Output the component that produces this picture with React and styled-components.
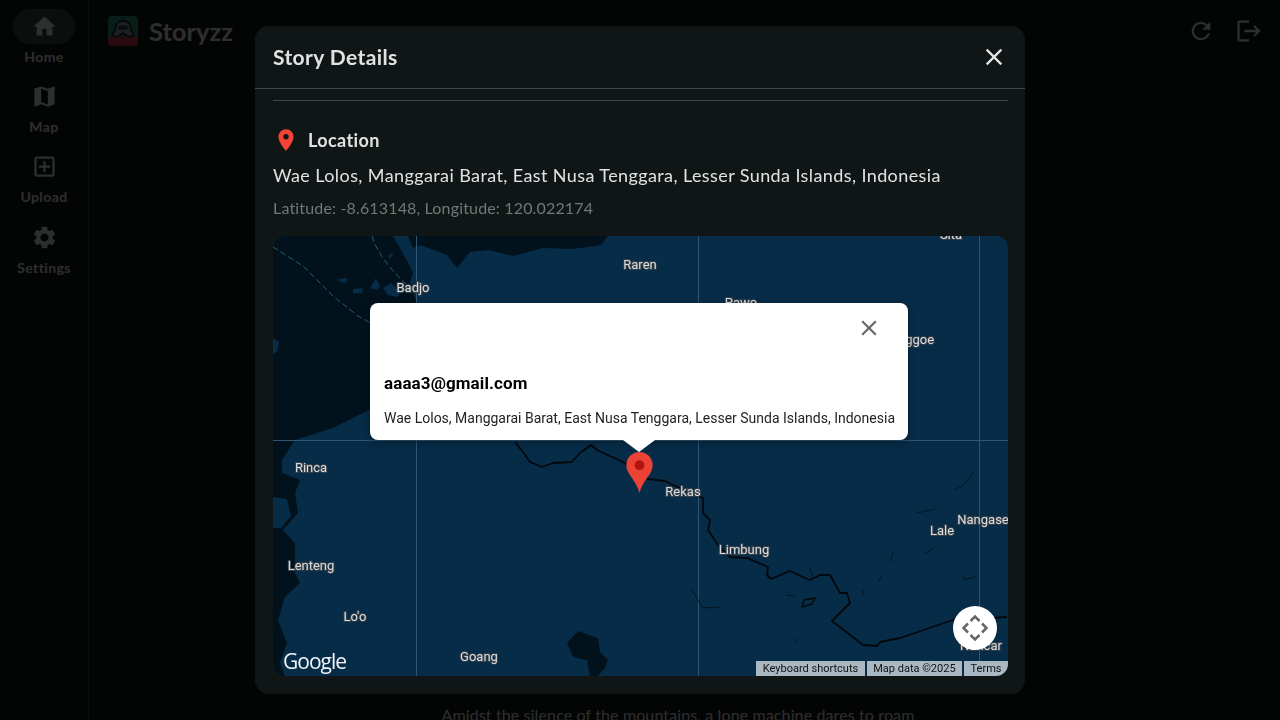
import React from 'react'
import styled, { createGlobalStyle } from 'styled-components'
import {
  MdHome,
  MdMap,
  MdOutlineAddBox,
  MdSettings,
  MdRefresh,
  MdLogout,
  MdClose,
  MdLocationOn,
} from 'react-icons/md'

const GlobalStyle = createGlobalStyle`
  html, body { margin: 0; padding: 0; height: 100%; overflow: hidden; background: #101615; }
  body { font-family: "Lato", "Noto Sans", sans-serif; color: #e0e3e3; font-variant-ligatures: none; }
  * { box-sizing: border-box; }
`

const Page = styled.div`
  display: flex;
  height: 720px;
  overflow: hidden;
`

const Sidebar = styled.nav`
  width: 89px;
  flex-shrink: 0;
  border-right: 1px solid #3f4948;
  display: flex;
  flex-direction: column;
  align-items: center;
  padding-top: 9px;
  gap: 11.2px;
`

const NavItem = styled.div`
  display: flex;
  flex-direction: column;
  align-items: center;
  height: 59px;
`

const NavPill = styled.div`
  width: 62px;
  height: 35px;
  border-radius: 18px;
  display: flex;
  align-items: center;
  justify-content: center;
  background: ${(p) => (p.$active ? '#3f4948' : 'transparent')};
  font-size: 27px;
  color: #e0e3e3;
`

const NavLabel = styled.span`
  font-size: 14px;
  font-weight: 700;
  line-height: 20px;
  margin-top: 3px;
  letter-spacing: 0.4px;
`

const Main = styled.div`
  flex: 1;
  display: flex;
  flex-direction: column;
`

const Header = styled.header`
  display: flex;
  flex-shrink: 0;
  align-items: center;
  height: 62px;
  padding: 0 17px 0 19px;
  gap: 11px;
`

const BrandName = styled.span`
  font-size: 25.5px;
  font-weight: 700;
  flex: 1;
`

const HeaderAction = styled.span`
  display: flex;
  font-size: 28px;
  margin-left: 9px;
`

const StoryText = styled.p`
  margin: 642px 0 0;
  padding-right: 13px;
  text-align: center;
  font-size: 16px;
  line-height: 22px;
  letter-spacing: 0.12px;
  white-space: nowrap;
`

const Overlay = styled.div`
  position: fixed;
  inset: 0;
  background: rgba(0, 0, 0, 0.8);
  display: flex;
  align-items: center;
  justify-content: center;
`

const Modal = styled.div`
  width: 770px;
  height: 668px;
  background: #101615;
  border-radius: 14px;
  display: flex;
  flex-direction: column;
  overflow: hidden;
`

const ModalHeader = styled.div`
  height: 63px;
  flex-shrink: 0;
  display: flex;
  align-items: center;
  justify-content: space-between;
  padding: 0 17px 0 18px;
  border-bottom: 1px solid #3f4948;
`

const ModalTitle = styled.h2`
  margin: 0 0 2px;
  font-size: 21px;
  font-weight: 700;
  letter-spacing: 0.4px;
`

const CloseButton = styled.span`
  display: flex;
  font-size: 28px;
`

const ModalBody = styled.div`
  flex: 1;
  padding: 11px 17px 18px 18px;
  display: flex;
  flex-direction: column;
`

const Rule = styled.hr`
  margin: 0;
  border: 0;
  border-top: 1px solid #3f4948;
`

const LocationRow = styled.div`
  display: flex;
  align-items: center;
  gap: 9px;
  margin-top: 25px;
  height: 28px;
`

const PinIcon = styled.span`
  display: flex;
  font-size: 26px;
  color: #f44336;
`

const LocationTitle = styled.h3`
  margin: 0;
  font-size: 18px;
  font-weight: 700;
  letter-spacing: 0.4px;
`

const Address = styled.p`
  margin: 8px 0 0;
  font-size: 18px;
  line-height: 26px;
  letter-spacing: 0.4px;
`

const Coords = styled.p`
  margin: 9px 0 0;
  font-size: 16px;
  line-height: 22px;
  letter-spacing: 0.16px;
  color: #6f7978;
`

const MapBox = styled.div`
  position: relative;
  margin-top: 17px;
  height: 440px;
  border-radius: 12px;
  overflow: hidden;
  background: #072c48;
`

const MapDrawing = styled.svg`
  display: block;
  width: 100%;
  height: 100%;
`

const PlaceName = styled.text`
  font-family: "Roboto", sans-serif;
  font-size: 13px;
  font-weight: 400;
  fill: #dcdcdc;
  stroke: #35414b;
  stroke-width: 2px;
  paint-order: stroke;
  text-anchor: middle;
`

const GoogleMark = styled.span`
  position: absolute;
  left: 10px;
  bottom: 2px;
  font-family: "Open Sans", sans-serif;
  font-size: 21px;
  font-weight: 500;
  line-height: 26px;
  letter-spacing: -1px;
  color: #f2f4f5;
`

const Popup = styled.div`
  position: absolute;
  left: 97px;
  top: 67px;
  width: 538px;
  height: 137px;
  background: #fff;
  border-radius: 8px;
  box-shadow: 0 2px 7px 1px rgba(0, 0, 0, 0.3);
  padding: 69px 13px 0 14px;
  font-family: "Roboto", sans-serif;
  color: #000;

  &::after {
    content: '';
    position: absolute;
    left: 253px;
    top: 137px;
    border-left: 16px solid transparent;
    border-right: 16px solid transparent;
    border-top: 12px solid #fff;
  }
`

const PopupClose = styled.span`
  position: absolute;
  right: 26px;
  top: 12px;
  display: flex;
  font-size: 26px;
  color: #666;
`

const PopupTitle = styled.div`
  font-size: 17px;
  font-weight: 700;
  line-height: 22px;
  letter-spacing: 0.1px;
`

const PopupText = styled.div`
  margin-top: 15px;
  font-size: 14px;
  line-height: 18px;
  white-space: nowrap;
  color: #222;
`

const Marker = styled.svg`
  position: absolute;
  left: 352px;
  top: 216px;
  width: 29px;
  height: 42px;
`

const FullscreenButton = styled.svg`
  position: absolute;
  right: 11px;
  bottom: 26px;
  width: 44px;
  height: 44px;
`

const Attribution = styled.div`
  position: absolute;
  right: 0;
  bottom: 0;
  display: flex;
  gap: 2px;
  font-family: "Roboto", sans-serif;
  font-size: 11px;
  line-height: 15px;
  color: #111;
`

const AttributionItem = styled.span`
  height: 15px;
  background: #a9b8c3;
  padding: 0 6.5px;
  white-space: nowrap;
`

const navItems = [
  { label: 'Home', Icon: MdHome, active: true },
  { label: 'Map', Icon: MdMap },
  { label: 'Upload', Icon: MdOutlineAddBox },
  { label: 'Settings', Icon: MdSettings },
]

const places = [
  ['Sita', 678, -1],
  ['Raren', 367, 29],
  ['Badjo', 140, 52],
  ['Pawo', 468, 67],
  ['Nggoe', 642, 104],
  ['Rinca', 38, 232],
  ['Lenteng', 38, 330],
  ["Lo'o", 82, 381],
  ['Goang', 206, 421],
  ['Rekas', 410, 256],
  ['Limbung', 471, 314],
  ['Lale', 669, 295],
  ['Nangase', 710, 284],
  ['Nancar', 708, 410],
]

const address = 'Wae Lolos, Manggarai Barat, East Nusa Tenggara, Lesser Sunda Islands, Indonesia'

function Logo() {
  return (
    <svg width="30" height="30" viewBox="0 0 30 30">
      <rect width="30" height="30" rx="4" fill="#2a8c78" />
      <path d="M0 22l6-3 4 4 5-4 5 4 4-4 6 3v4a4 4 0 0 1-4 4H4a4 4 0 0 1-4-4z" fill="#c8324a" />
      <path d="M7 15c0-6 3-10 8-10s8 4 8 10l3 4-5 2-6-4-6 4-5-2z" fill="#8ea0b8" stroke="#101414" strokeWidth="1.5" />
      <path d="M9 12c2-4 10-4 12 0-3 3-9 3-12 0z" fill="#33475c" />
    </svg>
  )
}

function MapShapes() {
  return (
    <MapDrawing viewBox="0 0 735 440">
      <g fill="#02121c">
        <path d="M0 0H120L127 12L140 36L137 46L144 67V130L118 155L100 172L60 192L22 204L9 224L9 237L27 244L22 257L25 277L10 294L22 307L22 337L27 347L12 361L5 384L14 407L7 427L12 440H0Z" />
        <path d="M135 0H335L328 9L300 13L270 12L240 20L215 14L197 16L184 32L174 19L147 9L140 12Z" />
        <path d="M294 407L305 395L325 402L327 416L335 424L332 432L325 440H317L314 424L300 421Z" />
      </g>
      <g fill="#072c48">
        <path d="M65 43l9 -1l-1 5l-6 -1zM80 53l10 -1l-1 5l-9 0zM97 52l6 -10l4 8l-3 4zM110 52l8 -5l9 8l-2 6l-10 -2zM115 20l4 -3l1 3l-4 2z" />
        <path d="M0 102l6 4l-2 10l-4 2zM0 261l14 2l4 17l-10 12h-8z" />
      </g>
      <g fill="none" stroke="#1f5f72" strokeWidth="1" strokeDasharray="6 3">
        <path d="M0 11L30 30L60 60L85 80L110 94L145 81" />
        <path d="M99 0C104 18 120 36 135 50" />
      </g>
      <g stroke="#2f5673" strokeWidth="1">
        <path d="M143.500 0V440M425.500 0V440M706.500 0V440M0 204.500H735" />
      </g>
      <g fill="none" stroke="#02080c" strokeWidth="1.8" strokeLinejoin="round">
        <path d="M242 206L250 216L257 226L269 231L280 227L299 226L307 217L318 209L324 214L350 226L375 243L392 245L400 249L430 262L430 277L437 284L435 294L445 309L457 321L474 322L495 331L494 339L498 343L517 335L532 342L537 344L547 339L557 339L567 357L574 357L577 367L559 385L590 409L604 410L607 406L627 402L680 384L720 382L734 381" />
        <path d="M529 371l2 -7l11 -2l-3 6z" strokeWidth="1.4" />
      </g>
      <g fill="none" stroke="#031520" strokeWidth="1">
        <path d="M419 354L430 372L447 371M522 406l3 -4M682 254l10 -6l8 -12M644 277l18 -4M652 317l8 -4M617 326l3 -9M605 346l4 -7M689 339l3 5l12 -4M590 359v-5M513 359l9 1M537 332l3 10" />
      </g>
      {places.map(([name, x, y]) => (
        <PlaceName key={name} x={x} y={y + 4}>
          {name}
        </PlaceName>
      ))}
    </MapDrawing>
  )
}

export default function App() {
  return (
    <Page>
      <GlobalStyle />
      <Sidebar>
        {navItems.map(({ label, Icon, active }) => (
          <NavItem key={label}>
            <NavPill $active={active}>
              <Icon />
            </NavPill>
            <NavLabel>{label}</NavLabel>
          </NavItem>
        ))}
      </Sidebar>
      <Main>
        <Header>
          <Logo />
          <BrandName>Storyzz</BrandName>
          <HeaderAction><MdRefresh /></HeaderAction>
          <HeaderAction><MdLogout /></HeaderAction>
        </Header>
        <StoryText>Amidst the silence of the mountains, a lone machine dares to roam</StoryText>
      </Main>
      <Overlay>
        <Modal>
          <ModalHeader>
            <ModalTitle>Story Details</ModalTitle>
            <CloseButton><MdClose /></CloseButton>
          </ModalHeader>
          <ModalBody>
            <Rule />
            <LocationRow>
              <PinIcon><MdLocationOn /></PinIcon>
              <LocationTitle>Location</LocationTitle>
            </LocationRow>
            <Address>{address}</Address>
            <Coords>Latitude: -8.613148, Longitude: 120.022174</Coords>
            <MapBox>
              <MapShapes />
              <GoogleMark>Google</GoogleMark>
              <Popup>
                <PopupClose><MdClose /></PopupClose>
                <PopupTitle>aaaa3@gmail.com</PopupTitle>
                <PopupText>{address}</PopupText>
              </Popup>
              <Marker viewBox="0 0 27 43">
                <path d="M13.500 0C6 0 0 6 0 13.500C0 23 10 28 13.500 42C17 28 27 23 27 13.500C27 6 21 0 13.500 0Z" fill="#ea4335" />
                <circle cx="13.500" cy="13.500" r="5" fill="#b31412" />
              </Marker>
              <FullscreenButton viewBox="0 0 44 44">
                <circle cx="22" cy="22" r="22" fill="#fff" />
                <path d="M17.500 15L22 10.500L26.500 15M17.500 29L22 33.500L26.500 29M15 17.500L10.500 22L15 26.500M29 17.500L33.500 22L29 26.500" fill="none" stroke="#666" strokeWidth="2.5" />
              </FullscreenButton>
              <Attribution>
                <AttributionItem>Keyboard shortcuts</AttributionItem>
                <AttributionItem>Map data ©2025</AttributionItem>
                <AttributionItem>Terms</AttributionItem>
              </Attribution>
            </MapBox>
          </ModalBody>
        </Modal>
      </Overlay>
    </Page>
  )
}
